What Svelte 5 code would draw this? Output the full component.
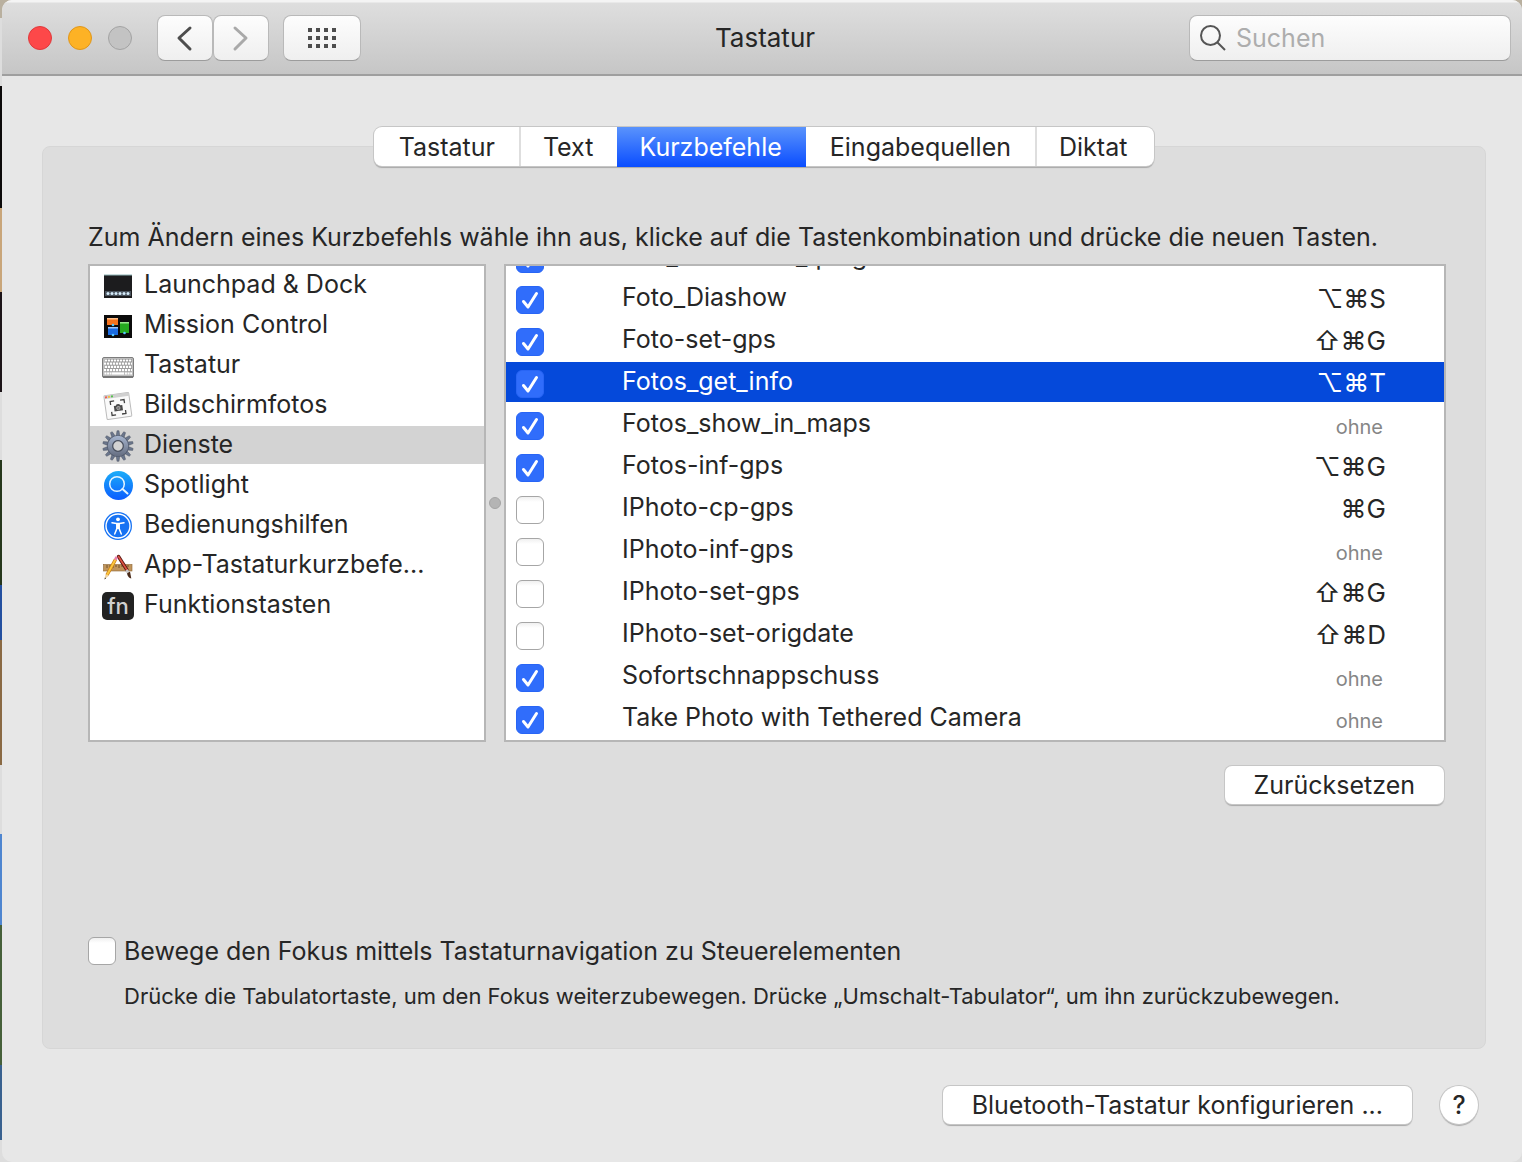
<script lang="ts">
  type Category = { id: string; name: string };
  type Service = { name: string; on: boolean; keys: string | null };

  const tabs = ['Tastatur', 'Text', 'Kurzbefehle', 'Eingabequellen', 'Diktat'];
  let activeTab = $state('Kurzbefehle');

  const categories: Category[] = [
    { id: 'launchpad', name: 'Launchpad & Dock' },
    { id: 'mission', name: 'Mission Control' },
    { id: 'keyboard', name: 'Tastatur' },
    { id: 'screenshot', name: 'Bildschirmfotos' },
    { id: 'services', name: 'Dienste' },
    { id: 'spotlight', name: 'Spotlight' },
    { id: 'access', name: 'Bedienungshilfen' },
    { id: 'apps', name: 'App-Tastaturkurzbefe...' },
    { id: 'fn', name: 'Funktionstasten' }
  ];
  let activeCategory = $state('services');

  let services: Service[] = $state([
    { name: 'Edit_extraction_tping', on: true, keys: null },
    { name: 'Foto_Diashow', on: true, keys: '⌥⌘S' },
    { name: 'Foto-set-gps', on: true, keys: '⇧⌘G' },
    { name: 'Fotos_get_info', on: true, keys: '⌥⌘T' },
    { name: 'Fotos_show_in_maps', on: true, keys: '' },
    { name: 'Fotos-inf-gps', on: true, keys: '⌥⌘G' },
    { name: 'IPhoto-cp-gps', on: false, keys: '⌘G' },
    { name: 'IPhoto-inf-gps', on: false, keys: '' },
    { name: 'IPhoto-set-gps', on: false, keys: '⇧⌘G' },
    { name: 'IPhoto-set-origdate', on: false, keys: '⇧⌘D' },
    { name: 'Sofortschnappschuss', on: true, keys: '' },
    { name: 'Take Photo with Tethered Camera', on: true, keys: '' }
  ]);
  let activeService = $state('Fotos_get_info');
  let moveFocus = $state(false);

  const teeth = Array.from({ length: 14 }, (_, i) => (i * 360) / 14);
  const dots = [0, 1, 2, 3].flatMap((c) => [0, 1, 2].map((r) => [c * 8, r * 8]));
</script>

{#snippet icon(id: string)}
  <svg class="icon" viewBox="0 0 32 32" aria-hidden="true">
    {#if id === 'launchpad'}
      <rect x="2" y="5" width="28" height="23" fill="#1c1c1e" />
      <rect x="2" y="4.500" width="28" height="1" fill="#8fb6b8" />
      <rect x="3" y="21" width="26" height="5" fill="#4a535d" />
      {#each [6, 10, 14, 18, 22, 26] as x}
        <circle cx={x} cy="23.500" r="1.500" fill="#d5ecfb" />
      {/each}
    {:else if id === 'mission'}
      <rect x="2" y="5" width="28" height="23" fill="#0b0b0b" />
      <rect x="5" y="8" width="11" height="7" fill="#f5731d" />
      <rect x="5" y="8" width="11" height="1.500" fill="#ffc08a" />
      <rect x="6" y="17" width="10" height="8" fill="#1b6be0" />
      <rect x="6" y="17" width="10" height="1.500" fill="#9cc6ff" />
      <rect x="18" y="12" width="9" height="11" fill="#25a81f" />
      <rect x="18" y="12" width="9" height="1.500" fill="#9be58f" />
      <circle cx="11" cy="15" r="1.300" fill="#55c8ff" />
      <circle cx="11" cy="25" r="1.300" fill="#55c8ff" />
      <circle cx="22.500" cy="23" r="1.300" fill="#55c8ff" />
    {:else if id === 'keyboard'}
      <rect x="0.500" y="7.500" width="31" height="20" rx="1.500" fill="#bdbdbd" stroke="#7d7d7d" />
      <rect x="1" y="26" width="30" height="2" fill="#777" />
      {#each [10.500, 13.700, 16.900, 20.100] as y, r}
        <path d={`M${r % 2 ? 2 : 3} ${y}H30`} stroke="#8c8c8c" stroke-width="3" />
        <path d={`M${r % 2 ? 2 : 3} ${y}H30`} stroke="#fff" stroke-width="2.200" stroke-dasharray="2.300 .7" />
      {/each}
      <path d="M2.500 23.500h7M23 23.500h7" stroke="#fff" stroke-width="2.200" stroke-dasharray="1.900 .7" />
      <path d="M10 23.500h12" stroke="#fff" stroke-width="2.200" />
    {:else if id === 'screenshot'}
      <g transform="rotate(-8 16 17)">
        <rect x="3.500" y="4" width="25" height="24" rx="1" fill="#fafafa" stroke="#bcbcbc" />
        <rect x="3.500" y="4" width="25" height="3.500" fill="#d0d0d0" />
        <circle cx="5.500" cy="5.700" r="1.100" fill="#f0564f" />
        <circle cx="8.500" cy="5.700" r="1.100" fill="#f3bd3f" />
        <circle cx="11.500" cy="5.700" r="1.100" fill="#53c24a" />
        <path d="M9 14v-3.500h4M19 10.500h4V14M23 21v3.500h-4M13 24.500H9V21" fill="none" stroke="#444" stroke-width="1.300" />
        <path d="M12 15.500h2l1-1.300h2.500l1 1.300h2v5.500H12z" fill="#4a4a4a" />
        <circle cx="16.200" cy="18.100" r="1.700" fill="#777" stroke="#ddd" stroke-width=".5" />
      </g>
    {:else if id === 'services'}
      <defs>
        <linearGradient id="gear" gradientUnits="userSpaceOnUse" x1="16" y1="5" x2="16" y2="27">
          <stop offset="0" stop-color="#a9b8d2" />
          <stop offset="1" stop-color="#626a7d" />
        </linearGradient>
      </defs>
      {#each teeth as a}
        <path d="M14 7 15 .7h2l1 6.300z" fill="#6b768c" stroke="#3f4757" stroke-width=".4" transform={`rotate(${a} 16 16)`} />
      {/each}
      <circle cx="16" cy="16" r="8" fill="none" stroke="#4f586a" stroke-width="5.600" />
      <circle cx="16" cy="16" r="8" fill="none" stroke="url(#gear)" stroke-width="4.600" />
      <circle cx="16" cy="16" r="5.300" fill="#d3d3d3" stroke="#4a5160" stroke-width="1.200" />
    {:else if id === 'spotlight'}
      <defs>
        <linearGradient id="spot" x1="0" y1="0" x2="0" y2="1">
          <stop offset="0" stop-color="#1badf8" />
          <stop offset="1" stop-color="#0b5cff" />
        </linearGradient>
      </defs>
      <circle cx="16.500" cy="15.500" r="14.500" fill="url(#spot)" />
      <circle cx="15" cy="14" r="7.300" fill="none" stroke="#e4f4ff" stroke-width="1.500" />
      <path d="m20.500 19 5 4.500" stroke="#e4f4ff" stroke-width="2" stroke-linecap="round" />
    {:else if id === 'access'}
      <circle cx="16" cy="16" r="14" fill="#1672f3" />
      <circle cx="16" cy="16" r="12" fill="none" stroke="#fff" stroke-width="1.400" />
      <circle cx="16" cy="9.300" r="1.900" fill="#fff" />
      <path d="m10 12.800 4.500.8h3l4.500-.8M14.900 13.500v5l-2.200 5.500M17.100 13.500v5l2.200 5.500" fill="none" stroke="#fff" stroke-width="1.500" stroke-linecap="round" />
      <path d="M14.200 13.500h3.600V19h-3.600z" fill="#fff" />
    {:else if id === 'apps'}
      <rect x="1.500" y="14.500" width="28.500" height="6.500" fill="#c0955c" stroke="#8d6534" stroke-width=".6" />
      <path d="M5 15v3M8 15v2M11 15v3M14 15v2M17 15v3M20 15v2M23 15v3M26 15v2" stroke="#5e421f" stroke-width=".8" />
      <path d="M16.500 6.500 25 20" stroke="#5a1712" stroke-width="3.400" stroke-linecap="round" />
      <path d="M16.500 6.500 25 20" stroke="#dd5442" stroke-width="1.600" stroke-linecap="round" />
      <path d="M24.500 20 27 24" stroke="#c8c8c8" stroke-width="3" />
      <path d="m25 23.500 3-2 1.300 7c-2.300-.5-3.600-2-4.300-5z" fill="#4a2b1a" />
      <path d="M13.500 9.500 5 25" stroke="#c77a12" stroke-width="3.400" />
      <path d="M13.500 9.500 5 25" stroke="#fbc63d" stroke-width="2" />
      <path d="m12 9 1.500-2.700 2.400 1.400-1.400 2.700z" fill="#ea7fb0" />
      <path d="m3.500 24.200 3 1.700-4 3.600z" fill="#f0d3a0" />
      <path d="m2.900 27.500 1.200.7-1.600 1.300z" fill="#222" />
    {:else}
      <rect y="2" width="32" height="28" rx="5" fill="#222" />
      <text x="16" y="24" text-anchor="middle" class="fn">fn</text>
    {/if}
  </svg>
{/snippet}

{#snippet tick()}
  <svg class="tick" viewBox="0 0 28 28" aria-hidden="true">
    <path d="m7.500 15.500 4.500 5.500L20.500 7.500" />
  </svg>
{/snippet}

<div class="desktop">
  <div class="window">
    <header class="titlebar">
      <div class="controls">
        <div class="lights">
          <button class="light red" aria-label="Schließen"></button>
          <button class="light yellow" aria-label="Im Dock ablegen"></button>
          <button class="light" aria-label="Zoomen" disabled></button>
        </div>
        <div class="nav">
          <button class="tool" aria-label="Zurück">
            <svg viewBox="0 0 28 28"><path d="M19 4 8 14l11 11" /></svg>
          </button>
          <button class="tool dim" aria-label="Vorwärts" disabled>
            <svg viewBox="0 0 28 28"><path d="m8 4 11 10L8 25" /></svg>
          </button>
        </div>
        <button class="tool wide" aria-label="Alle einblenden">
          <svg class="dots" viewBox="0 0 28 20">
            {#each dots as [x, y]}
              <rect {x} {y} width="4" height="4" />
            {/each}
          </svg>
        </button>
      </div>
      <h1>Tastatur</h1>
      <label class="search">
        <svg viewBox="0 0 26 26" aria-hidden="true"><circle cx="10.500" cy="10.500" r="9.500" /><path d="m17 17 8 8" /></svg>
        <input type="search" placeholder="Suchen" aria-label="Suchen" />
      </label>
    </header>

    <main>
      <div class="tabs" role="tablist">
        {#each tabs as tab}
          <button role="tab" aria-selected={tab === activeTab} class:active={tab === activeTab} onclick={() => (activeTab = tab)}>{tab}</button>
        {/each}
      </div>

      <section class="panel">
        <p class="hint">Zum Ändern eines Kurzbefehls wähle ihn aus, klicke auf die Tastenkombination und drücke die neuen Tasten.</p>

        <div class="split">
          <ul class="list categories">
            {#each categories as c}
              <li>
                <button class:active={c.id === activeCategory} onclick={() => (activeCategory = c.id)}>
                  {@render icon(c.id)}
                  <span>{c.name}</span>
                </button>
              </li>
            {/each}
          </ul>
          <div class="divider"><span></span></div>
          <div class="list services">
            <ul>
              {#each services as s, i}
                <li class:active={s.name === activeService}>
                  <span class="check">
                    <input id={`service-${i}`} type="checkbox" bind:checked={s.on} />
                    {@render tick()}
                  </span>
                  <label for={`service-${i}`}>{s.name}</label>
                  {#if s.keys}
                    <kbd>{s.keys}</kbd>
                  {:else if s.keys !== null}
                    <span class="none">ohne</span>
                  {/if}
                </li>
              {/each}
            </ul>
          </div>
        </div>

        <button class="push reset">Zurücksetzen</button>

        <div class="focus">
          <span class="check">
            <input id="move-focus" type="checkbox" bind:checked={moveFocus} />
            {@render tick()}
          </span>
          <label for="move-focus">Bewege den Fokus mittels Tastaturnavigation zu Steuerelementen</label>
          <p>Drücke die Tabulatortaste, um den Fokus weiterzubewegen. Drücke „Umschalt-Tabulator“, um ihn zurückzubewegen.</p>
        </div>
      </section>

      <footer>
        <button class="push">Bluetooth-Tastatur konfigurieren ...</button>
        <button class="help" aria-label="Hilfe">?</button>
      </footer>
    </main>
  </div>
</div>

<style>
  :global(body) {
    margin: 0;
  }
  .desktop {
    box-sizing: border-box;
    min-height: 100vh;
    padding-left: 2px;
    display: flex;
    background: linear-gradient(#b9b09f 0 18px, #ddd 18px 86px, #0c0a0a 86px 208px, #c9a67a 208px 292px, #1c1418 292px 392px, #ddd 392px 460px, #26371c 460px 585px, #2450a0 585px 640px, #8a6a44 640px 765px, #ddd 765px 834px, #4f86d0 834px 925px, #46603a 925px 1065px, #39618f 1065px 1140px, #ddd 1140px);
    color: #262626;
    font: 25px/30px Inter, "Liberation Sans", sans-serif;
  }
  button,
  input {
    font: inherit;
    color: inherit;
  }
  button {
    margin: 0;
    padding: 0;
    border: 0;
    background: none;
  }
  .window {
    flex: 1;
    min-width: 0;
    display: flex;
    flex-direction: column;
    overflow: hidden;
    border-radius: 10px;
    background: #e7e7e7;
  }
  .titlebar {
    display: grid;
    grid-template-columns: 1fr auto 1fr;
    align-items: center;
    box-sizing: border-box;
    height: 76px;
    padding: 2px 11px 0 17px;
    border-bottom: 2px solid #9f9f9f;
    background: linear-gradient(#f4f4f4 0 2px, #dedede 3px, #c6c6c6);
  }
  h1 {
    margin: 0;
    font-size: 26px;
    font-weight: 400;
  }
  .controls,
  .lights,
  .nav {
    display: flex;
    align-items: center;
  }
  .lights {
    gap: 16px;
    margin: 0 25px 0 9px;
  }
  .nav {
    margin-right: 14px;
  }
  .light {
    width: 24px;
    height: 24px;
    border: 1px solid #a3a3a3;
    border-radius: 50%;
    background: #c3c3c3;
  }
  .red {
    border-color: #e0393b;
    background: #fd4849;
  }
  .yellow {
    border-color: #e0961a;
    background: #fdb225;
  }
  .tool,
  .search {
    box-sizing: border-box;
    height: 46px;
    border: 1px solid #b9b9b9;
    border-bottom-color: #9c9c9c;
    border-radius: 8px;
    background: linear-gradient(#fdfdfd, #efefef);
  }
  .tool {
    display: grid;
    place-items: center;
    width: 56px;
  }
  .wide {
    width: 78px;
  }
  .tool svg {
    width: 28px;
    height: 28px;
    fill: none;
    stroke: #4d4d4d;
    stroke-width: 3;
    stroke-linecap: round;
    stroke-linejoin: round;
  }
  .dim svg {
    stroke: #a9a9a9;
  }
  .tool .dots {
    height: 20px;
    fill: #4d4d4d;
    stroke: none;
  }
  .search {
    justify-self: end;
    display: flex;
    align-items: center;
    gap: 10px;
    width: 322px;
    padding: 0 10px;
  }
  .search svg {
    flex: none;
    width: 26px;
    height: 26px;
    fill: none;
    stroke: #555;
    stroke-width: 2;
  }
  .search input {
    flex: 1;
    min-width: 0;
    padding: 0;
    border: 0;
    outline: 0;
    background: none;
  }
  .search input::placeholder {
    color: #adadad;
  }
  main {
    padding: 51px 36px 36px 40px;
  }
  .tabs {
    position: relative;
    display: flex;
    width: fit-content;
    height: 39px;
    margin: 0 auto -20px;
    border-radius: 8px;
    background: #fff;
    box-shadow: 0 0 0 1px #c6c6c6, 0 2px 1px #a8a8a8;
  }
  .tabs button {
    padding: 0 24px 0 22px;
    border-left: 2px solid #dedede;
  }
  .tabs button:first-child {
    padding-left: 25px;
    border-left: 0;
  }
  .tabs button:last-child {
    padding-right: 27px;
  }
  .tabs .active + button {
    padding-left: 24px;
    border-left: 0;
  }
  .tabs .active {
    height: 40px;
    border: 0;
    background: linear-gradient(#5a93fc, #0a4dff);
    color: #fff;
  }
  .panel {
    display: flex;
    flex-direction: column;
    padding: 75px 39px 37px 45px;
    border: 1px solid #d6d6d6;
    border-radius: 8px;
    background: #dddddd;
  }
  .hint {
    margin: 0 0 12px;
    white-space: nowrap;
  }
  .split {
    display: flex;
    height: 478px;
  }
  .list {
    box-sizing: border-box;
    margin: 0;
    padding: 0;
    overflow: hidden;
    border: 2px solid #b6b6b6;
    background: #fff;
  }
  ul {
    margin: 0;
    padding: 0;
    list-style: none;
  }
  li {
    margin-bottom: 2px;
  }
  .categories {
    width: 398px;
  }
  .categories button {
    display: flex;
    align-items: center;
    gap: 10px;
    width: 100%;
    height: 38px;
    padding: 0 0 2px 12px;
    text-align: left;
    white-space: nowrap;
  }
  .categories .active {
    background: #d3d3d3;
  }
  .icon {
    flex: none;
    width: 32px;
    height: 32px;
    margin-top: 3px;
  }
  .fn {
    font-size: 22px;
    font-weight: 500;
    fill: #d0d0d0;
  }
  .divider {
    display: grid;
    place-items: center;
    width: 18px;
  }
  .divider span {
    width: 10px;
    height: 10px;
    border: 1px solid #a4a4a4;
    border-radius: 50%;
    background: #b4b4b4;
  }
  .services {
    flex: 1;
    min-width: 0;
  }
  .services ul {
    margin-top: -29px;
  }
  .services li {
    display: grid;
    grid-template-columns: 106px 1fr auto;
    align-items: center;
    box-sizing: border-box;
    height: 40px;
    padding: 0 58px 2px 10px;
  }
  .services li:first-child {
    margin-bottom: 1px;
  }
  .services li > .check {
    margin-top: 6px;
  }
  .services .active {
    background: #0549da;
    color: #fff;
  }
  kbd {
    margin-top: 3px;
    font: inherit;
    font-size: 26px;
  }
  .none {
    margin-top: 8px;
    padding-right: 3px;
    color: #868686;
    font-size: 20px;
  }
  .check {
    display: grid;
    width: 28px;
    height: 28px;
  }
  .check input,
  .tick {
    grid-area: 1 / 1;
    box-sizing: border-box;
    width: 28px;
    height: 28px;
    margin: 0;
  }
  .check input {
    appearance: none;
    border: 1px solid #a6a6a6;
    border-radius: 6px;
    background: linear-gradient(#f0f0f0, #fff 5px);
  }
  .check input:checked {
    border-color: #2865f5;
    background: #306dfb;
  }
  .tick {
    visibility: hidden;
    pointer-events: none;
    fill: none;
    stroke: #fff;
    stroke-width: 3;
    stroke-linecap: round;
    stroke-linejoin: round;
  }
  input:checked + .tick {
    visibility: visible;
  }
  .push,
  .help {
    height: 38px;
    border-radius: 7px;
    background: #fff;
    box-shadow: 0 0 0 1px #c6c6c6, 0 2px 1px #a8a8a8;
  }
  .push {
    padding: 0 29px;
  }
  .reset {
    align-self: flex-end;
    margin: 24px 2px 0 0;
  }
  .focus {
    display: grid;
    grid-template-columns: 28px 1fr;
    gap: 15px 8px;
    align-items: center;
    margin-top: 132px;
  }
  .focus p {
    grid-column: 2;
    margin: 0;
    font-size: 22px;
    white-space: nowrap;
  }
  footer {
    display: flex;
    justify-content: flex-end;
    gap: 28px;
    margin-top: 37px;
    padding-right: 8px;
  }
  .help {
    width: 38px;
    border-radius: 50%;
    font-weight: 500;
  }
</style>
